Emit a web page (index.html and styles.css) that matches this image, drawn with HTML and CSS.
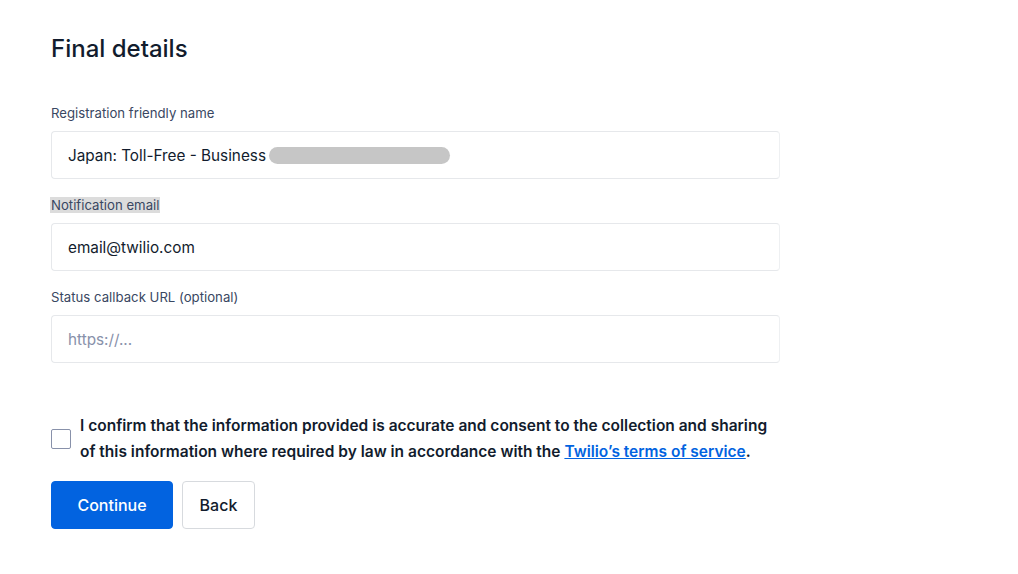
FILE: index.html
```html
<!DOCTYPE html>
<html lang="en">
<head>
    <meta charset="UTF-8">
    <title>Final details</title>
    <link rel="stylesheet" href="styles.css">
</head>
<body>
    <main class="page">
        <h1 class="title">Final details</h1>

        <form class="form">
            <div class="field">
                <label class="label" for="friendlyName">Registration friendly name</label>
                <div class="input">
                    <span>Japan: Toll-Free - Business</span>
                    <span class="redacted"></span>
                </div>
            </div>

            <div class="field">
                <label class="label"><span class="highlight">Notification email</span></label>
                <div class="input">email@twilio.com</div>
            </div>

            <div class="field">
                <label class="label">Status callback URL (optional)</label>
                <div class="input placeholder">https://...</div>
            </div>

            <div class="consent">
                <span class="checkbox"></span>
                <p class="consent-text">I confirm that the information provided is accurate and consent to the collection and sharing of this information where required by law in accordance with the <a href="#">Twilio’s terms of service</a>.</p>
            </div>

            <div class="actions">
                <button type="button" class="btn primary">Continue</button>
                <button type="button" class="btn secondary">Back</button>
            </div>
        </form>
    </main>
</body>
</html>
```

FILE: styles.css
```css
body {
    margin: 0;
    background: #ffffff;
    font-family: Inter, "Liberation Sans", Arial, sans-serif;
    color: #121c2d;
}
.page {
    width: 729px;
    padding: 33px 0 0 51px;
}
.title {
    margin: 0 0 39px;
    font-size: 24px;
    font-weight: 500;
    line-height: 32px;
    color: #121c2d;
}
.form {
    display: flex;
    flex-direction: column;
}
.field {
    display: flex;
    flex-direction: column;
    gap: 9px;
    margin-bottom: 17px;
}
.field:nth-child(3) {
    margin-bottom: 50px;
}
.label {
    font-size: 13.2px;
    line-height: 18px;
    color: #394762;
}
.highlight {
    background: #dcdcdc;
    padding: 0 1px;
    margin-left: -1px;
}
.input {
    display: flex;
    align-items: center;
    height: 46px;
    padding: 0 16px;
    border: 1px solid #e6e8eb;
    border-right-color: #eef0f2;
    border-radius: 4px;
    font-size: 15.3px;
    color: #121c2d;
}
.placeholder {
    color: #8891aa;
}
.redacted {
    display: inline-block;
    width: 181px;
    height: 17px;
    margin-left: 3px;
    border-radius: 9px;
    background: #c6c6c6;
}
.consent {
    display: flex;
    gap: 9px;
    align-items: center;
    margin-bottom: 16px;
}
.checkbox {
    flex: none;
    width: 18px;
    height: 18px;
    border: 1px solid #8891aa;
    border-radius: 2px;
}
.consent-text {
    max-width: 692px;
    margin: 0;
    font-size: 15.5px;
    font-weight: 600;
    line-height: 26px;
    color: #121c2d;
}
.consent-text a {
    color: #0263e0;
}
.actions {
    display: flex;
    gap: 9px;
}
.btn {
    height: 48px;
    padding: 0 24px;
    border-radius: 4px;
    font-family: inherit;
    font-size: 16px;
    font-weight: 500;
    cursor: pointer;
}
.primary {
    background: #0263e0;
    color: #ffffff;
    border: 1px solid #0263e0;
    width: 122px;
}
.secondary {
    background: #ffffff;
    color: #121c2d;
    border: 1px solid #d7dade;
    padding: 0 16px;
    width: 73px;
}
```
